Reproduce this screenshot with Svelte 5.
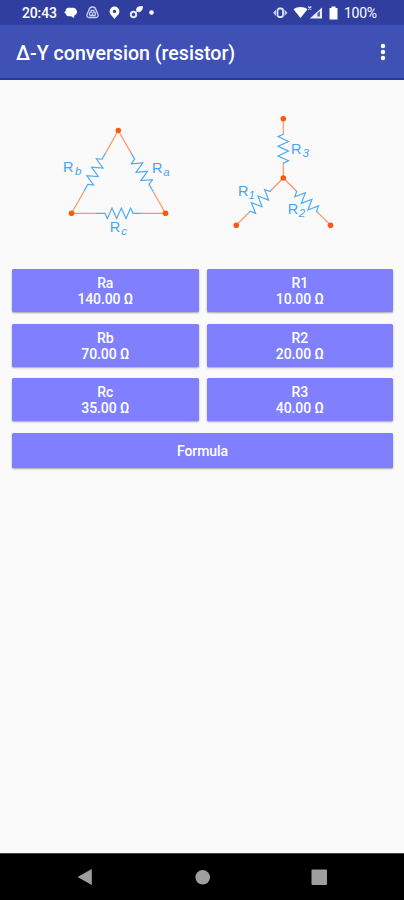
<script lang="ts">
  type Resistor = {
    from: [number, number];
    to: [number, number];
    lead: [number, number];
    zig: [number, number];
  };

  const values = $state([
    { name: 'Ra', ohms: 140 },
    { name: 'R1', ohms: 10 },
    { name: 'Rb', ohms: 70 },
    { name: 'R2', ohms: 20 },
    { name: 'Rc', ohms: 35 },
    { name: 'R3', ohms: 40 }
  ]);

  // lead = where the blue part starts and ends, zig = extent of the zigzag
  const resistors: Resistor[] = [
    { from: [118.3, 130.5], to: [71.5, 213.3], lead: [26, 70], zig: [33, 62] },
    { from: [118.3, 130.5], to: [165.5, 213.3], lead: [26, 70], zig: [33, 62] },
    { from: [71.5, 213.3], to: [165.5, 213.3], lead: [24, 70], zig: [33.5, 61.5] },
    { from: [283.3, 118.7], to: [283.3, 178], lead: [14, 46], zig: [15.5, 44.5] },
    { from: [283.3, 178], to: [236.3, 225.2], lead: [17, 49], zig: [19, 47] },
    { from: [283.3, 178], to: [330.5, 225.2], lead: [17, 49], zig: [19, 47] }
  ];

  const nodes = [
    [118.3, 130.5], [71.5, 213.3], [165.5, 213.3],
    [283.3, 118.7], [283.3, 178], [236.3, 225.2], [330.5, 225.2]
  ];

  const labels = [
    { x: 63, y: 172, sub: 'b', dx: 75 },
    { x: 152, y: 173, sub: 'a', dx: 163.3 },
    { x: 109.7, y: 232, sub: 'c', dx: 121.3 },
    { x: 238, y: 196, sub: '1', dx: 248.4 },
    { x: 287.7, y: 213.7, sub: '2', dx: 298.8 },
    { x: 291, y: 154.4, sub: '3', dx: 302.4 }
  ];

  function len(r: Resistor) {
    return Math.hypot(r.to[0] - r.from[0], r.to[1] - r.from[1]);
  }

  function place(r: Resistor) {
    const angle = Math.atan2(r.to[1] - r.from[1], r.to[0] - r.from[0]) * 180 / Math.PI;
    return `translate(${r.from[0]} ${r.from[1]}) rotate(${angle})`;
  }

  function zigzag(r: Resistor) {
    const [a, b] = r.zig;
    const step = (b - a) / 6;
    let d = `M${r.lead[0]} 0H${a}`;
    for (let i = 0; i < 6; i++) {
      d += `L${a + step * (i + 0.5)} ${i % 2 === 0 ? 5.2 : -5.2}`;
    }
    return d + `L${b} 0H${r.lead[1]}`;
  }
</script>

<div class="screen">
  <div class="status">
    <span class="clock">20:43</span>
    <svg class="left-icons" width="96" height="25" viewBox="0 0 96 25">
      <path d="M6 7.800h5c2.500 0 3.600 1.700 4.200 4.200-.6 1.500-1 2.500-2.700 3.300l-.6 2.700-2.700-1.700H6.500C4.600 16.300 4.200 15 4 14l-1.800-1.500L3.700 11C3.700 9.200 4.700 7.800 6 7.800z" fill="#fff" />
      <g fill="none" stroke="#c9cff0" stroke-width="1.300">
        <path d="M30.500 7c2 0 3.300 1.300 3.700 3.600l1.800 4c.5 1.700-.4 2.900-2 2.900h-7c-1.600 0-2.500-1.200-2-2.900l1.800-4C27.200 8.300 28.500 7 30.500 7z" />
        <path d="M28 15.500c-1.200-1.700-.2-3.500 1.200-3.500v-1.600h2.600V12c1.400 0 2.400 1.800 1.200 3.500z" />
        <path d="M30.500 12.500v3" />
      </g>
      <path fill-rule="evenodd" d="M52.500 6.500a4.900 4.900 0 0 1 4.900 4.900c0 3.200-3.600 5.200-4.900 7.500-1.300-2.300-4.900-4.300-4.900-7.500a4.900 4.900 0 0 1 4.900-4.900zm0 3.200a1.700 1.700 0 1 0 0 3.400 1.700 1.700 0 0 0 0-3.400z" fill="#fff" />
      <circle cx="71.500" cy="14.500" r="2.700" fill="none" stroke="#e4e7fa" stroke-width="2" />
      <path d="M74.500 9l1.500-2 4.500-.5-.5 3-2 2.300-3-.3zM73.700 12.700l2-2" fill="#fff" stroke="#e4e7fa" />
      <circle cx="89.500" cy="12.500" r="2.300" fill="#fff" />
    </svg>
    <svg class="right-icons" width="70" height="25" viewBox="0 0 70 25">
      <rect x="5.500" y="8.500" width="5.500" height="8.500" rx="2" fill="none" stroke="#dfe3f8" stroke-width="1.800" />
      <path d="M4 9.500v6.500L1 12.800zM12.500 9.500v6.500l3-3.200z" fill="#c0c8ee" />
      <path d="M21.500 9.300c4-3 10-3 14 0L28.500 18z" fill="#fff" />
      <path d="M36.300 6.500l3 3m0-3l-3 3" stroke="#dfe3f8" stroke-width="1.200" />
      <path d="M50 7.500V18.500H37.800z" fill="#e9ecfb" />
      <path d="M48 11v5.500h-2.700v-3.300z" fill="#5a68b8" />
      <path d="M59.500 6.500h4v1.400h2V19.500h-8V7.900h2z" fill="#fff" />
    </svg>
    <span class="battery">100%</span>
  </div>

  <header class="app-bar">
    <h1>Δ-Y conversion (resistor)</h1>
    <button class="menu" aria-label="More options">
      <svg width="6" height="20" viewBox="0 0 6 20" fill="#fff">
        <circle cx="3" cy="4" r="2.200" />
        <circle cx="3" cy="10" r="2.200" />
        <circle cx="3" cy="16" r="2.200" />
      </svg>
    </button>
  </header>

  <main>
    <svg class="diagram" width="404" height="189" viewBox="0 80 404 189">
      {#each resistors as r}
        <g transform={place(r)}>
          <path class="wire" d="M0 0H{r.lead[0]}M{r.lead[1]} 0H{len(r)}" />
          <path class="coil" d={zigzag(r)} />
        </g>
      {/each}
      {#each nodes as [x, y]}
        <circle cx={x} cy={y} r="2.800" fill="#ff5714" />
      {/each}
      {#each labels as l}
        <text x={l.x} y={l.y}>R</text>
        <text class="sub" x={l.dx} y={l.y + 3}>{l.sub}</text>
      {/each}
    </svg>

    <div class="buttons">
      {#each values as v}
        <button class="value">
          <span>{v.name}</span>
          <span>{v.ohms.toFixed(2)} Ω</span>
        </button>
      {/each}
      <button class="formula">Formula</button>
    </div>
  </main>

  <nav>
    <svg width="404" height="46" viewBox="0 0 404 46" fill="#9e9e9e">
      <path d="M77.500 23L91.800 15v16z" />
      <circle cx="202.700" cy="23.300" r="7.300" />
      <rect x="311.500" y="15.500" width="15.500" height="15.500" rx="1" />
    </svg>
  </nav>
</div>

<style>
  :global(body) {
    margin: 0;
  }

  .screen {
    width: 404px;
    height: 900px;
    display: flex;
    flex-direction: column;
    overflow: hidden;
    background: #fafafa;
    font-family: Roboto, 'Liberation Sans', sans-serif;
  }

  .status {
    height: 25px;
    flex: none;
    display: flex;
    align-items: center;
    background: #303f9f;
    color: #fff;
    font-size: 14px;
    font-weight: 500;
  }

  .clock {
    width: 40px;
    padding: 1px 0 0 22px;
    letter-spacing: -0.15px;
  }

  .right-icons {
    margin-left: auto;
  }

  .battery {
    width: 60px;
    margin-left: 2px;
    padding-top: 1px;
    font-weight: 400;
    letter-spacing: -0.25px;
  }

  .app-bar {
    box-sizing: border-box;
    height: 55px;
    flex: none;
    display: flex;
    align-items: center;
    justify-content: space-between;
    padding: 0 18px 0 16px;
    background: #3f51b5;
    border-bottom: 2px solid #1d3ba0;
    color: #fff;
  }

  h1 {
    margin: 4px 0 0;
    font-size: 19.6px;
    font-weight: 500;
    white-space: nowrap;
  }

  button {
    border: none;
    padding: 0;
    font: inherit;
    color: #fff;
  }

  .menu {
    display: flex;
    background: none;
  }

  main {
    flex: 1;
  }

  .diagram {
    display: block;
  }

  .wire,
  .coil {
    fill: none;
    stroke-width: 1.2;
  }

  .wire {
    stroke: #ff9466;
  }

  .coil {
    stroke: #4fabf5;
  }

  text {
    font-family: 'Liberation Sans', sans-serif;
    font-size: 14.5px;
    fill: #45a6f5;
  }

  .sub {
    font-size: 11.5px;
    font-style: italic;
  }

  .buttons {
    display: grid;
    grid-template-columns: 1fr 1fr;
    gap: 11.7px 8px;
    padding: 0 11px 0 12px;
  }

  .value,
  .formula {
    display: flex;
    flex-direction: column;
    align-items: center;
    justify-content: center;
    height: 43px;
    border-radius: 1.5px;
    background: #8080ff;
    box-shadow: 0 1px 2px rgba(0, 0, 0, 0.35);
    font-size: 14px;
    font-weight: 500;
    line-height: 16px;
    letter-spacing: -0.1px;
  }

  .value {
    padding-top: 1px;
  }

  .formula {
    grid-column: span 2;
    height: 35px;
    padding-top: 1px;
  }

  nav {
    height: 46px;
    flex: none;
    background: #000;
    border-top: 1px solid #444;
  }

  nav svg {
    display: block;
  }
</style>
